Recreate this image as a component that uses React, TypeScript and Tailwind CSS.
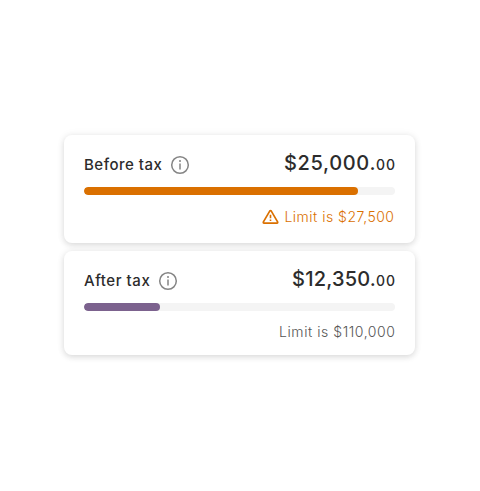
type Tax = {
  label: string;
  dollars: string;
  limit: string;
  warning?: boolean;
  barClass: string;
  labelClass: string;
  dollarsClass: string;
  limitClass: string;
  cardClass: string;
};

const items: Tax[] = [
  {
    label: "Before tax",
    dollars: "$25,000.",
    limit: "Limit is $27,500",
    warning: true,
    barClass: "w-[274px] bg-[#da7000]",
    labelClass: "w-[78px] tracking-[0.5px]",
    dollarsClass: "tracking-[0.65px]",
    limitClass: "mt-3 pr-px text-[#da7000] tracking-[0.5px]",
    cardClass: "h-[108px]",
  },
  {
    label: "After tax",
    dollars: "$12,350.",
    limit: "Limit is $110,000",
    barClass: "w-[76px] bg-[#7c628e]",
    labelClass: "w-[66px] tracking-[0.55px]",
    dollarsClass: "tracking-[0.2px]",
    limitClass: "mt-[11px] text-[#555555] tracking-[0.56px]",
    cardClass: "h-[104px]",
  },
];

function InfoIcon() {
  return (
    <svg className="ml-2 size-5 shrink-0" viewBox="0 0 20 20" fill="none">
      <circle cx="10" cy="10" r="8.3" stroke="#858585" strokeWidth="1.5" />
      <path d="M10 8.5V14.4" stroke="#858585" strokeWidth="1.5" />
      <circle cx="10" cy="6.1" r="1" fill="#858585" />
    </svg>
  );
}

function WarningIcon() {
  return (
    <svg className="mr-[5px] h-4 w-[17px] shrink-0" viewBox="0 0 17 16" fill="none">
      <path
        d="M7.7 2.1Q8.5 1 9.3 2.1L15.6 12.9Q16 14 14.9 14.2H2.1Q1 14 1.4 12.9Z"
        stroke="#da7000"
        strokeWidth="1.7"
        strokeLinejoin="round"
      />
      <path d="M8.5 5.7V9.3M8.5 10.6V12.1" stroke="#da7000" strokeWidth="1.6" />
    </svg>
  );
}

function TaxCard({ item }: { item: Tax }) {
  return (
    <section
      className={`w-[351px] rounded-lg bg-white px-5 pt-4 shadow-[0_2px_6px_rgba(0,0,0,0.13),0_0_10px_rgba(0,0,0,0.05)] ${item.cardClass}`}
    >
      <div className="flex h-7 items-center justify-between">
        <div className="flex items-center">
          <span className={`whitespace-nowrap text-[15px] leading-5 font-medium ${item.labelClass}`}>
            {item.label}
          </span>
          <InfoIcon />
        </div>
        <div className="flex items-baseline pb-0.5 leading-6">
          <span className={`text-[20px] font-[550] ${item.dollarsClass}`}>{item.dollars}</span>
          <span className="-mr-[0.8px] text-[14px] font-medium tracking-[0.8px]">00</span>
        </div>
      </div>
      <div className="mt-2 h-2 overflow-hidden rounded-full bg-[#f4f4f4]">
        <div className={`h-full rounded-full ${item.barClass}`} />
      </div>
      <div className={`flex h-5 items-center justify-end text-[14px] font-[350] ${item.limitClass}`}>
        {item.warning && <WarningIcon />}
        <span className="-mr-[0.5px] pb-px">{item.limit}</span>
      </div>
    </section>
  );
}

export default function App() {
  return (
    <main className="flex h-[491px] w-[480px] flex-col gap-2 bg-white pt-[135px] pl-16 font-['Inter',sans-serif] text-[#2c2c2c]">
      {items.map((item) => (
        <TaxCard key={item.label} item={item} />
      ))}
    </main>
  );
}
